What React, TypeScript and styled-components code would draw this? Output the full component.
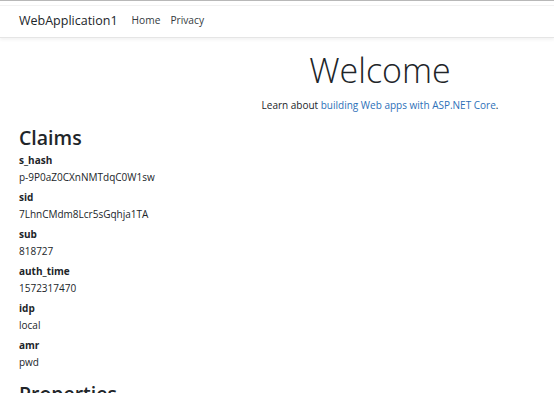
import React from "react";
import styled, { createGlobalStyle } from "styled-components";

type Claim = {
  type: string;
  value: string;
};

const claims: Claim[] = [
  { type: "s_hash", value: "p-9P0aZ0CXnNMTdqC0W1sw" },
  { type: "sid", value: "7LhnCMdm8Lcr5sGqhja1TA" },
  { type: "sub", value: "818727" },
  { type: "auth_time", value: "1572317470" },
  { type: "idp", value: "local" },
  { type: "amr", value: "pwd" },
];

const GlobalStyle = createGlobalStyle`
  html, body {
    margin: 0;
    padding: 0;
    overflow: hidden;
    background: #fff;
  }
  body {
    font-family: "Open Sans", "Noto Sans", sans-serif;
    color: #212529;
  }
`;

export default function App() {
  return (
    <>
      <GlobalStyle />
      <SPage>
        <SHeader>
          <SNav>
            <SBrand>WebApplication1</SBrand>
            <SNavLink>Home</SNavLink>
            <SNavLink>Privacy</SNavLink>
          </SNav>
        </SHeader>
        <SMain>
          <SHero>
            <STitle>Welcome</STitle>
            <SLead>
              Learn about <SLink>building Web apps with ASP.NET Core</SLink>.
            </SLead>
          </SHero>
          <SHeading>Claims</SHeading>
          <SList>
            {claims.map((c) => (
              <React.Fragment key={c.type}>
                <STerm>{c.type}</STerm>
                <SDesc>{c.value}</SDesc>
              </React.Fragment>
            ))}
          </SList>
          <SHeading>Properties</SHeading>
        </SMain>
      </SPage>
    </>
  );
}

const SPage = styled.div`
  width: 554px;
  height: 393px;
  overflow: hidden;
  border-top: 1px solid #b8b8b8;
  box-sizing: border-box;
`;

const SHeader = styled.header`
  margin-top: 4px;
  border-top: 1px solid #f2f2f2;
  border-bottom: 1px solid #e5e5e5;
  box-shadow: 0 2px 3px rgba(0, 0, 0, 0.05);
`;

const SNav = styled.nav`
  display: flex;
  align-items: center;
  height: 31px;
  padding: 0 19px 3px;
  box-sizing: border-box;
`;

const SBrand = styled.span`
  font-size: 12.5px;
  color: #212529;
  margin-right: 9px;
`;

const SNavLink = styled.span`
  font-size: 10.2px;
  color: #343a40;
  padding: 0 5px;
`;

const SMain = styled.main`
  padding: 12px 19px 0;
  width: 722px;
`;

const SHero = styled.div`
  text-align: center;
`;

const STitle = styled.h1`
  margin: 0;
  font-size: 34px;
  font-weight: 300;
  line-height: 1.2;
`;

const SLead = styled.p`
  margin: 7px 0 13px;
  font-size: 10px;
  line-height: 15px;
`;

const SLink = styled.a`
  color: #2d70b8;
  text-decoration: none;
`;

const SHeading = styled.h2`
  margin: 0 0 3px;
  font-size: 19.5px;
  font-weight: 550;
  line-height: 1.2;
`;

const SList = styled.dl`
  margin: 0 0 11px;
  font-size: 10px;
  line-height: 17px;
`;

const STerm = styled.dt`
  font-weight: 700;
`;

const SDesc = styled.dd`
  margin: 0 0 3px;
`;
